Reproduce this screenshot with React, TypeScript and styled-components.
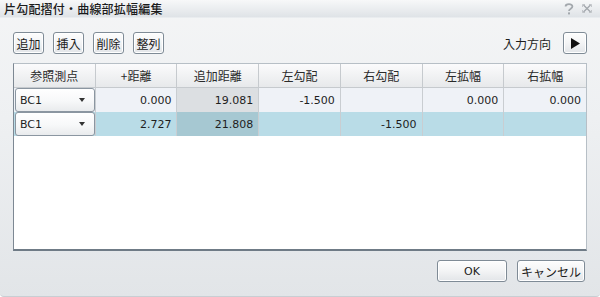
import React from 'react'
import styled, { createGlobalStyle } from 'styled-components'

const GlobalStyle = createGlobalStyle`
  html, body {
    margin: 0;
    padding: 0;
    width: 600px;
    height: 297px;
    overflow: hidden;
  }
  body {
    font-family: "Noto Sans CJK JP", "DejaVu Sans", sans-serif;
    color: #1e1e1e;
  }
`

const cjk = `"Noto Sans CJK JP", sans-serif`
const latin = `"DejaVu Sans", "Noto Sans CJK JP", sans-serif`

const Window = styled.div`
  width: 600px;
  height: 297px;
  box-sizing: border-box;
  display: flex;
  flex-direction: column;
  background: linear-gradient(#f4f5f6 0%, #eef0f2 40%, #e2e5e8 100%);
  border-bottom: 1px solid #c9ced3;
  border-radius: 0 0 4px 4px;
`

const TitleBar = styled.div`
  height: 17px;
  display: flex;
  align-items: center;
  justify-content: space-between;
  padding: 0 8px 0 4px;
  background: linear-gradient(#f7f8f9, #dfe3e7);
  border-bottom: 1px solid #e9ecef;
`

const Title = styled.div`
  font-family: ${cjk};
  font-size: 12px;
  font-weight: 500;
  line-height: 17px;
  color: #1b1b1b;
  letter-spacing: 0.2px;
`

const TitleIcons = styled.div`
  display: flex;
  gap: 8px;
  align-items: center;
`

const Toolbar = styled.div`
  display: flex;
  align-items: center;
  margin-top: 14px;
  padding: 0 13px;
  height: 22px;
`

const ToolButtons = styled.div`
  display: flex;
  gap: 9px;
  flex: 1;
`

const Button = styled.button<{ $w?: number; $latin?: boolean }>`
  width: ${({ $w }) => $w ?? 31}px;
  height: 22px;
  padding: 0;
  box-sizing: border-box;
  border: 1px solid #7f8b96;
  border-radius: 3px;
  background: linear-gradient(#fdfdfd 0%, #f3f4f5 50%, #e2e5e8 100%);
  box-shadow: inset 0 0 0 1px #ffffff;
  font-family: ${({ $latin }) => ($latin ? latin : cjk)};
  font-size: ${({ $latin }) => ($latin ? 11 : 12)}px;
  color: #1b1b1b;
  display: flex;
  align-items: center;
  justify-content: center;
`

const DirLabel = styled.span`
  font-family: ${cjk};
  font-size: 12px;
  margin-right: 12px;
`

const Grid = styled.div`
  margin: 9px 13px 0;
  height: 188px;
  box-sizing: border-box;
  background: #ffffff;
  border: 1px solid #b7bfc6;
  border-left-color: #7d8893;
  border-bottom: 2px solid #6f7b86;
  display: flex;
  flex-direction: column;
`

const Row = styled.div<{ $bg?: string }>`
  display: grid;
  grid-template-columns: repeat(7, 1fr);
  height: 24px;
  background: ${({ $bg }) => $bg ?? 'transparent'};
`

const HeadRow = styled(Row)`
  background: linear-gradient(#fbfbfc, #e7e9eb);
  border-bottom: 1px solid #c6cace;
  height: 23px;
`

const HeadCell = styled.div`
  font-family: ${cjk};
  font-size: 12px;
  display: flex;
  align-items: center;
  justify-content: center;
  border-right: 1px solid #c6cace;
  color: #2a2a2a;
  &:last-child {
    border-right: none;
  }
`

const Cell = styled.div<{ $bg?: string }>`
  font-family: ${latin};
  font-size: 11px;
  display: flex;
  align-items: center;
  justify-content: flex-end;
  padding-right: 5px;
  border-right: 1px solid #c9cdd1;
  background: ${({ $bg }) => $bg ?? 'transparent'};
  color: #1e1e1e;
  &:last-child {
    border-right: none;
  }
`

const ComboCell = styled.div`
  padding: 0;
  border-right: 1px solid #c9cdd1;
  display: flex;
`

const Combo = styled.div`
  flex: 1;
  margin: 0 0 0 1px;
  box-sizing: border-box;
  border: 1px solid #8b96a1;
  border-radius: 3px;
  background: linear-gradient(#ffffff 0%, #f7f8f9 55%, #e9ebed 100%);
  display: flex;
  align-items: center;
  justify-content: space-between;
  padding: 0 9px 0 4px;
  font-family: ${latin};
  font-size: 11px;
`

const Caret = styled.span`
  width: 0;
  height: 0;
  border-left: 3.5px solid transparent;
  border-right: 3.5px solid transparent;
  border-top: 4px solid #333;
`

const Footer = styled.div`
  display: flex;
  justify-content: flex-end;
  gap: 10px;
  padding: 9px 15px 0 0;
`

const headers = ['参照測点', '+距離', '追加距離', '左勾配', '右勾配', '左拡幅', '右拡幅']

type Data = { plus: string; add: string; lg: string; rg: string; lw: string; rw: string }

const rows: Data[] = [
  { plus: '0.000', add: '19.081', lg: '-1.500', rg: '', lw: '0.000', rw: '0.000' },
  { plus: '2.727', add: '21.808', lg: '', rg: '-1.500', lw: '', rw: '' },
]

function HelpIcon() {
  return (
    <svg width="10" height="12" viewBox="0 0 10 12">
      <path d="M1.6 3.6 C1.6 0.4 8.4 0.4 8.4 3.6 C8.4 5.8 5 5.6 5 8" stroke="#a3a8ad" strokeWidth="1.8" fill="none" />
      <rect x="4" y="9.4" width="2" height="2" fill="#a3a8ad" />
    </svg>
  )
}

function CloseIcon() {
  return (
    <svg width="10" height="9" viewBox="0 0 10 9">
      <path d="M1.5 1 L8.5 8 M8.5 1 L1.5 8" stroke="#a3a8ad" strokeWidth="1.3" fill="none" />
      <path d="M0.5 0.5 H3 M0.5 0.5 V3 M9.5 8.5 H7 M9.5 8.5 V6 M9.5 0.5 H7 M9.5 0.5 V3 M0.5 8.5 H3 M0.5 8.5 V6" stroke="#b7bbbf" strokeWidth="0.8" fill="none" />
    </svg>
  )
}

export default function App() {
  return (
    <>
      <GlobalStyle />
      <Window>
        <TitleBar>
          <Title>片勾配摺付・曲線部拡幅編集</Title>
          <TitleIcons>
            <HelpIcon />
            <CloseIcon />
          </TitleIcons>
        </TitleBar>
        <Toolbar>
          <ToolButtons>
            <Button>追加</Button>
            <Button>挿入</Button>
            <Button>削除</Button>
            <Button>整列</Button>
          </ToolButtons>
          <DirLabel>入力方向</DirLabel>
          <Button $w={24}>
            <svg width="10" height="11" viewBox="0 0 10 11">
              <path d="M1 0 L10 5.5 L1 11 Z" fill="#111" />
            </svg>
          </Button>
        </Toolbar>
        <Grid>
          <HeadRow>
            {headers.map((h) => (
              <HeadCell key={h}>{h}</HeadCell>
            ))}
          </HeadRow>
          {rows.map((r, i) => {
            const selected = i === 1
            return (
              <Row key={i} $bg={selected ? '#b9dce7' : '#eff2f7'}>
                <ComboCell>
                  <Combo>
                    BC1
                    <Caret />
                  </Combo>
                </ComboCell>
                <Cell>{r.plus}</Cell>
                <Cell $bg={selected ? '#a6c8d2' : '#dcdfe2'}>{r.add}</Cell>
                <Cell>{r.lg}</Cell>
                <Cell>{r.rg}</Cell>
                <Cell>{r.lw}</Cell>
                <Cell>{r.rw}</Cell>
              </Row>
            )
          })}
        </Grid>
        <Footer>
          <Button $w={70} $latin>OK</Button>
          <Button $w={68}>キャンセル</Button>
        </Footer>
      </Window>
    </>
  )
}
